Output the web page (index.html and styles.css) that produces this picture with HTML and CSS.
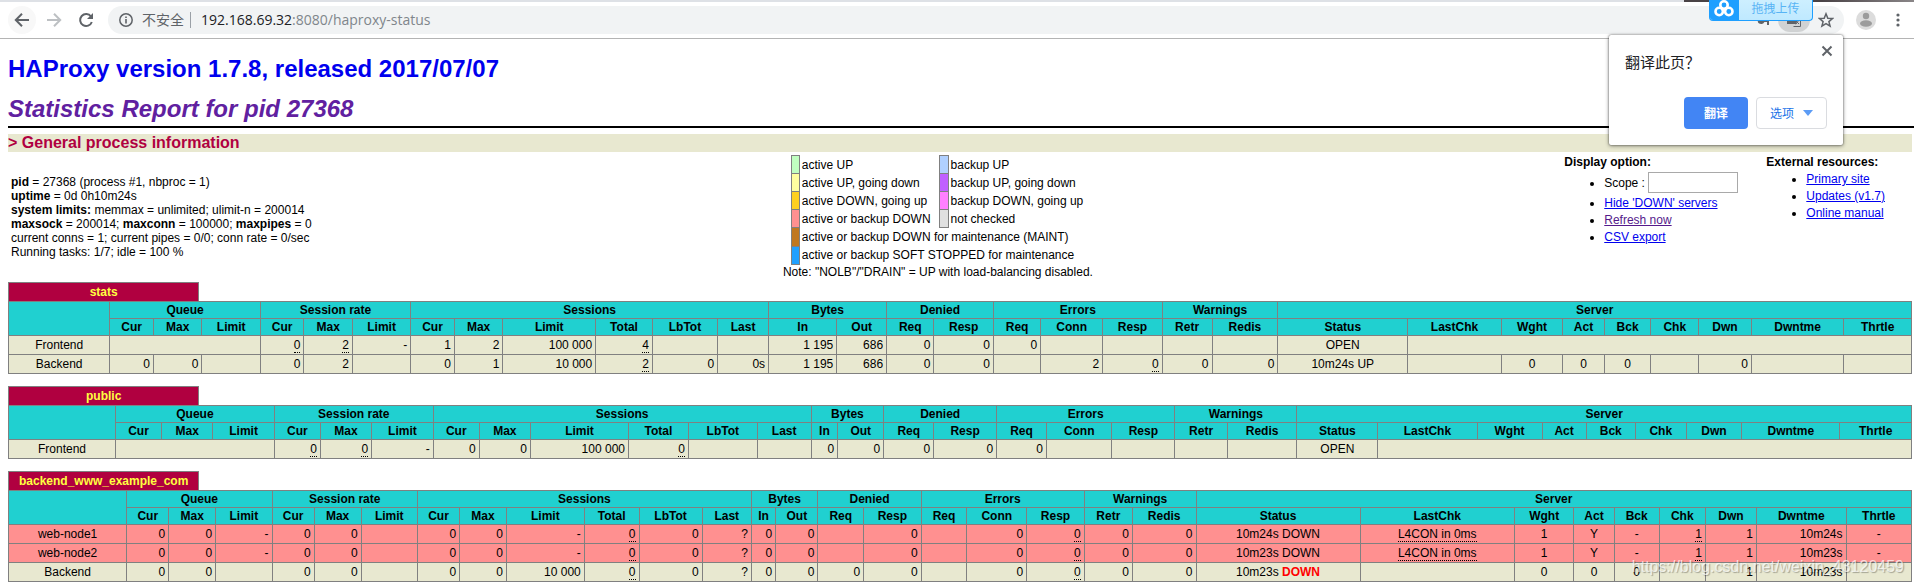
FILE: index.html
```html
<!DOCTYPE html>
<html lang="zh-CN">
	<head>
		<meta charset="utf-8">
		<title>Statistics Report for HAProxy</title>
		<link rel="stylesheet" href="styles.css">
	</head>
	<body>
		<div class="browser">
			<div class="tabstrip"><span class="tabedge"></span></div>
			<div class="toolbar">
				<button class="nav back" aria-label="Back"><svg width="16" height="16" viewBox="0 0 16 16"><path d="M15 8H2.5M8 1.8L1.8 8L8 14.2" fill="none" stroke="#5f6368" stroke-width="2"/></svg></button>
				<button class="nav" aria-label="Forward"><svg width="16" height="16" viewBox="0 0 16 16"><path d="M1 8H13.5M8 1.8L14.2 8L8 14.2" fill="none" stroke="#bdc0c3" stroke-width="2"/></svg></button>
				<button class="nav" aria-label="Reload"><svg width="16" height="16" viewBox="0 0 16 16"><path d="M13 4.5A6 6 0 1 0 13.8 10" fill="none" stroke="#5f6368" stroke-width="2"/><path d="M15 1V7H9z" fill="#5f6368"/></svg></button>
				<div class="omnibox">
					<svg width="16" height="16" viewBox="0 0 16 16"><circle cx="8" cy="8" r="6.2" fill="none" stroke="#5f6368" stroke-width="1.5"/><path d="M7.2 7h1.6v4.5H7.2zM7.2 4.4h1.6v1.6H7.2z" fill="#5f6368"/></svg>
					<span class="insecure">不安全</span>
					<span class="url"><b>192.168.69.32</b>:8080/haproxy-status</span>
					<svg class="key" width="14" height="14" viewBox="0 0 14 14"><path d="M5 4a3.5 3.5 0 1 0 3.4 5H11v3h2V6H8.4A3.500 3.500 0 0 0 5 4z" fill="#5f6368"/></svg>
					<button class="translate" aria-label="Translate"><svg width="16" height="16" viewBox="0 0 16 16"><path d="M1 1h7l3 11H1z" fill="#5f6368"/><path d="M9 4.500h5.500V14.500H7.500" fill="none" stroke="#5f6368"/><path d="M9.500 7.500h4M12.500 7.500c0 2-2 4-3 4.500M10 9l3 3" fill="none" stroke="#5f6368"/></svg></button>
					<button class="star" aria-label="Bookmark"><svg width="16" height="16" viewBox="0 0 16 16"><path d="M8 1.800L9.800 6.200L14.500 6.500L10.900 9.600L12.100 14.200L8 11.700L3.900 14.200L5.100 9.600L1.500 6.500L6.200 6.200z" fill="none" stroke="#5f6368" stroke-width="1.500"/></svg></button>
				</div>
				<button class="avatar" aria-label="Profile"><svg width="20" height="20" viewBox="0 0 20 20"><circle cx="10" cy="10" r="10" fill="#dcdcdc"/><circle cx="10" cy="6" r="3.200" fill="#9c9c9c"/><ellipse cx="10" cy="13.500" rx="6" ry="3.200" fill="#9c9c9c"/></svg></button>
				<button class="menu" aria-label="Menu"><svg width="4" height="16" viewBox="0 0 4 16"><circle cx="2" cy="3" r="1.600" fill="#5f6368"/><circle cx="2" cy="8" r="1.600" fill="#5f6368"/><circle cx="2" cy="13" r="1.600" fill="#5f6368"/></svg></button>
			</div>

			<button class="upload">
				<span class="cloud"><svg width="20" height="18" viewBox="0 0 20 18"><g fill="none" stroke="#fff" stroke-width="2.600"><circle cx="10" cy="5" r="3.700"/><circle cx="5.200" cy="11.500" r="3.700"/><circle cx="14.800" cy="11.500" r="3.700"/></g></svg></span>
				<span class="drag">拖拽上传</span>
			</button>

			<div class="bubble">
				<button class="close" aria-label="Close"><svg width="12" height="12" viewBox="0 0 12 12"><path d="M1.500 1.500L10.500 10.500M10.500 1.500L1.500 10.500" stroke="#5f6368" stroke-width="2"/></svg></button>
				<div class="question">翻译此页？</div>
				<div class="actions">
					<button class="primary">翻译</button>
					<button class="options">选项<svg width="10" height="6" viewBox="0 0 10 6"><path d="M0 0h10L5 6z" fill="#5c9cf5"/></svg></button>
				</div>
			</div>
		</div>

		<div class="page">
			<h1><a href="#">HAProxy version 1.7.8, released 2017/07/07</a></h1>
			<h2>Statistics Report for pid 27368</h2>
			<hr class="hr">
			<h3>&gt; General process information</h3>

			<div class="general">
				<p class="process">
					<b>pid</b> = 27368 (process #1, nbproc = 1)<br>
					<b>uptime</b> = 0d 0h10m24s<br>
					<b>system limits:</b> memmax = unlimited; ulimit-n = 200014<br>
					<b>maxsock</b> = 200014; <b>maxconn</b> = 100000; <b>maxpipes</b> = 0<br>
					current conns = 1; current pipes = 0/0; conn rate = 0/sec<br>
					Running tasks: 1/7; idle = 100 %
				</p>
				<div class="legend">
					<table class="lgd">
						<tr><td class="active_up">&nbsp;</td><td class="noborder">active UP</td><td class="backup_up">&nbsp;</td><td class="noborder">backup UP</td></tr>
						<tr><td class="active_going_down">&nbsp;</td><td class="noborder">active UP, going down</td><td class="backup_going_down">&nbsp;</td><td class="noborder">backup UP, going down</td></tr>
						<tr><td class="active_going_up">&nbsp;</td><td class="noborder">active DOWN, going up</td><td class="backup_going_up">&nbsp;</td><td class="noborder">backup DOWN, going up</td></tr>
						<tr><td class="active_down">&nbsp;</td><td class="noborder">active or backup DOWN &nbsp;</td><td class="no_check">&nbsp;</td><td class="noborder">not checked</td></tr>
						<tr><td class="maintain">&nbsp;</td><td class="noborder" colspan="3">active or backup DOWN for maintenance (MAINT)</td></tr>
						<tr><td class="soft_stop">&nbsp;</td><td class="noborder" colspan="3">active or backup SOFT STOPPED for maintenance</td></tr>
					</table>
					Note: "NOLB"/"DRAIN" = UP with load-balancing disabled.
				</div>
				<div>
					<b>Display option:</b>
					<ul>
						<li><label for="scope">Scope :</label> <input type="text" id="scope" name="scope"></li>
						<li><a href="#">Hide 'DOWN' servers</a></li>
						<li><a class="visited" href="#">Refresh now</a></li>
						<li><a href="#">CSV export</a></li>
					</ul>
				</div>
				<div>
					<b>External resources:</b>
					<ul>
						<li><a href="#">Primary site</a></li>
						<li><a href="#">Updates (v1.7)</a></li>
						<li><a href="#">Online manual</a></li>
					</ul>
				</div>
			</div>

			<table class="tbl">
				<tr><th class="pxname">stats</th><th class="empty"></th></tr>
			</table>
			<table class="tbl stat px_stats">
				<tr class="titre"><th rowspan="2"></th><th colspan="3">Queue</th><th colspan="3">Session rate</th><th colspan="6">Sessions</th><th colspan="2">Bytes</th><th colspan="2">Denied</th><th colspan="3">Errors</th><th colspan="2">Warnings</th><th class="server" colspan="9">Server</th></tr>
				<tr class="titre"><th>Cur</th><th>Max</th><th>Limit</th><th>Cur</th><th>Max</th><th>Limit</th><th>Cur</th><th>Max</th><th>Limit</th><th>Total</th><th>LbTot</th><th>Last</th><th>In</th><th>Out</th><th>Req</th><th>Resp</th><th>Req</th><th>Conn</th><th>Resp</th><th>Retr</th><th>Redis</th><th>Status</th><th>LastChk</th><th>Wght</th><th>Act</th><th>Bck</th><th>Chk</th><th>Dwn</th><th>Dwntme</th><th>Thrtle</th></tr>
				<tr class="frontend"><td class="ac">Frontend</td><td colspan="3"></td><td><u>0</u></td><td><u>2</u></td><td>-</td><td>1</td><td>2</td><td>100 000</td><td><u>4</u></td><td></td><td></td><td>1 195</td><td>686</td><td>0</td><td>0</td><td>0</td><td></td><td></td><td></td><td></td><td class="ac">OPEN</td><td class="ac" colspan="8"></td></tr>
				<tr class="backend"><td class="ac">Backend</td><td>0</td><td>0</td><td></td><td>0</td><td>2</td><td></td><td>0</td><td>1</td><td>10 000</td><td><u>2</u></td><td>0</td><td>0s</td><td>1 195</td><td>686</td><td>0</td><td>0</td><td></td><td>2</td><td><u>0</u></td><td>0</td><td>0</td><td class="ac">10m24s UP</td><td class="ac">&nbsp;</td><td class="ac">0</td><td class="ac">0</td><td class="ac">0</td><td class="ac">&nbsp;</td><td>0</td><td></td><td></td></tr>
			</table>

			<table class="tbl">
				<tr><th class="pxname">public</th><th class="empty"></th></tr>
			</table>
			<table class="tbl stat px_public">
				<tr class="titre"><th rowspan="2"></th><th colspan="3">Queue</th><th colspan="3">Session rate</th><th colspan="6">Sessions</th><th colspan="2">Bytes</th><th colspan="2">Denied</th><th colspan="3">Errors</th><th colspan="2">Warnings</th><th class="server" colspan="9">Server</th></tr>
				<tr class="titre"><th>Cur</th><th>Max</th><th>Limit</th><th>Cur</th><th>Max</th><th>Limit</th><th>Cur</th><th>Max</th><th>Limit</th><th>Total</th><th>LbTot</th><th>Last</th><th>In</th><th>Out</th><th>Req</th><th>Resp</th><th>Req</th><th>Conn</th><th>Resp</th><th>Retr</th><th>Redis</th><th>Status</th><th>LastChk</th><th>Wght</th><th>Act</th><th>Bck</th><th>Chk</th><th>Dwn</th><th>Dwntme</th><th>Thrtle</th></tr>
				<tr class="frontend"><td class="ac">Frontend</td><td colspan="3"></td><td><u>0</u></td><td><u>0</u></td><td>-</td><td>0</td><td>0</td><td>100 000</td><td><u>0</u></td><td></td><td></td><td>0</td><td>0</td><td>0</td><td>0</td><td>0</td><td></td><td></td><td></td><td></td><td class="ac">OPEN</td><td class="ac" colspan="8"></td></tr>
			</table>

			<table class="tbl">
				<tr><th class="pxname">backend_www_example_com</th><th class="empty"></th></tr>
			</table>
			<table class="tbl stat px_backend">
				<tr class="titre"><th rowspan="2"></th><th colspan="3">Queue</th><th colspan="3">Session rate</th><th colspan="6">Sessions</th><th colspan="2">Bytes</th><th colspan="2">Denied</th><th colspan="3">Errors</th><th colspan="2">Warnings</th><th class="server" colspan="9">Server</th></tr>
				<tr class="titre"><th>Cur</th><th>Max</th><th>Limit</th><th>Cur</th><th>Max</th><th>Limit</th><th>Cur</th><th>Max</th><th>Limit</th><th>Total</th><th>LbTot</th><th>Last</th><th>In</th><th>Out</th><th>Req</th><th>Resp</th><th>Req</th><th>Conn</th><th>Resp</th><th>Retr</th><th>Redis</th><th>Status</th><th>LastChk</th><th>Wght</th><th>Act</th><th>Bck</th><th>Chk</th><th>Dwn</th><th>Dwntme</th><th>Thrtle</th></tr>
				<tr class="active_down"><td class="ac">web-node1</td><td>0</td><td>0</td><td>-</td><td>0</td><td>0</td><td></td><td>0</td><td>0</td><td>-</td><td><u>0</u></td><td>0</td><td>?</td><td>0</td><td>0</td><td></td><td>0</td><td></td><td>0</td><td><u>0</u></td><td>0</td><td>0</td><td class="ac">10m24s DOWN</td><td class="ac"><u>L4CON in 0ms</u></td><td class="ac">1</td><td class="ac">Y</td><td class="ac">-</td><td><u>1</u></td><td>1</td><td>10m24s</td><td class="ac">-</td></tr>
				<tr class="active_down"><td class="ac">web-node2</td><td>0</td><td>0</td><td>-</td><td>0</td><td>0</td><td></td><td>0</td><td>0</td><td>-</td><td><u>0</u></td><td>0</td><td>?</td><td>0</td><td>0</td><td></td><td>0</td><td></td><td>0</td><td><u>0</u></td><td>0</td><td>0</td><td class="ac">10m23s DOWN</td><td class="ac"><u>L4CON in 0ms</u></td><td class="ac">1</td><td class="ac">Y</td><td class="ac">-</td><td><u>1</u></td><td>1</td><td>10m23s</td><td class="ac">-</td></tr>
				<tr class="backend"><td class="ac">Backend</td><td>0</td><td>0</td><td></td><td>0</td><td>0</td><td></td><td>0</td><td>0</td><td>10 000</td><td><u>0</u></td><td>0</td><td>?</td><td>0</td><td>0</td><td>0</td><td>0</td><td></td><td>0</td><td><u>0</u></td><td>0</td><td>0</td><td class="ac">10m23s <b class="down">DOWN</b></td><td class="ac">&nbsp;</td><td class="ac">0</td><td class="ac">0</td><td class="ac">0</td><td class="ac">&nbsp;</td><td>1</td><td>10m23s</td><td></td></tr>
			</table>
			<div class="watermark">https://blog.csdn.net/weixin_43120459</div>
		</div>
	</body>
</html>
```
FILE: styles.css
```css
body {
	margin: 0;
	font-family: "Liberation Sans", Arial, "Noto Sans CJK SC", sans-serif;
	font-size: 12px;
	line-height: 14px;
	color: black;
	background: white;
	overflow: hidden;
}
button {
	padding: 0;
	border: none;
	background: none;
	font-family: inherit;
	font-size: 12px;
	cursor: pointer;
}
svg { display: block; }

/* browser frame */
.browser {
	position: relative;
	z-index: 1;
	font-family: "Noto Sans", "Noto Sans CJK SC", sans-serif;
}
.tabstrip {
	display: flex;
	justify-content: flex-end;
	height: 2px;
	background: #dee1e6;
}
.tabedge {
	width: 12%;
	background: linear-gradient(90deg, #4a4346, #4a4346 60%, #8a8688);
}
.toolbar {
	display: flex;
	align-items: center;
	height: 36px;
	padding: 0 14px 0 8px;
	border-bottom: 1px solid #b4b4b4;
}
.nav {
	display: flex;
	align-items: center;
	justify-content: center;
	width: 28px;
	height: 28px;
	margin-right: 4px;
	border-radius: 14px;
}
.back { background: #f8f8f8; }
.omnibox {
	display: flex;
	flex: 1;
	align-items: center;
	height: 28px;
	margin-left: 4px;
	padding: 0 10px;
	border-radius: 14px;
	background: #f1f3f4;
}
.insecure {
	margin-left: 8px;
	padding-right: 6px;
	border-right: 1px solid #9aa0a6;
	font-size: 14px;
	line-height: 16px;
	color: #5f6368;
}
.url {
	flex: 1;
	margin-left: 10px;
	font-family: "Open Sans", "Noto Sans", sans-serif;
	font-size: 14px;
	color: #80868b;
}
.url b {
	font-weight: normal;
	color: #202124;
}
.translate {
	display: flex;
	align-items: center;
	justify-content: center;
	width: 32px;
	height: 24px;
	margin: 0 8px;
	border-radius: 12px;
	background: #d0d2d3;
}
.avatar { margin: 0 20px 0 12px; }

.upload {
	position: absolute;
	top: 0;
	right: 101px;
	display: flex;
	width: 104px;
	height: 21px;
	overflow: hidden;
	border: 1px solid #1e9fff;
	border-top: none;
	border-radius: 0 0 4px 4px;
	background: linear-gradient(#cdefff, #bfe9ff);
}
.cloud {
	width: 29px;
	height: 21px;
	padding-left: 4px;
	box-sizing: border-box;
	background: #1e9fff;
}
.drag {
	flex: 1;
	line-height: 18px;
	color: #58b4f5;
}

.bubble {
	position: absolute;
	top: 35px;
	right: 71px;
	width: 234px;
	height: 110px;
	box-sizing: border-box;
	padding: 17px 16px 16px;
	border-radius: 2px;
	background: white;
	box-shadow: 0 0 2px rgba(0,0,0,0.6), 0 1px 4px rgba(0,0,0,0.4);
}
.close {
	position: absolute;
	top: 10px;
	right: 10px;
}
.question {
	font-size: 15px;
	line-height: 20px;
	color: #202124;
}
.actions {
	display: flex;
	justify-content: flex-end;
	gap: 8px;
	margin-top: 25px;
}
.primary, .options {
	display: flex;
	align-items: center;
	justify-content: center;
	gap: 9px;
	height: 32px;
	box-sizing: border-box;
	border-radius: 4px;
}
.primary {
	width: 64px;
	background: #4285f4;
	color: white;
	font-weight: bold;
}
.options {
	width: 71px;
	border: 1px solid #dadce0;
	color: #1a73e8;
}

/* statistics page */
.page {
	position: relative;
	padding: 16px 2px 0 8px;
}
h1 {
	margin: 0 0 13px;
	font-size: 24px;
	line-height: 27px;
}
h1 a { text-decoration: none; }
h2 {
	margin: 0;
	font-size: 24px;
	line-height: 28px;
	font-style: italic;
	color: #6020a0;
}
h3 {
	margin: 0;
	font-size: 16px;
	line-height: 18px;
	color: #b00040;
	background: #e8e8d0;
}
.hr {
	width: 100%;
	margin: 3px 0 6px;
	border: 1px solid black;
}
a { color: #0000ee; }
.visited { color: #551a8b; }

.general {
	display: grid;
	grid-template-columns: auto 1fr auto auto;
	column-gap: 4px;
	padding: 3px;
	white-space: nowrap;
}
.process {
	align-self: center;
	margin: 0;
}
.legend { text-align: center; }
ul {
	margin: 3px 0 0;
	padding-left: 40px;
}
li {
	margin-top: 3px;
	margin-right: 24px;
}
li input {
	width: 90px;
	height: 21px;
	box-sizing: border-box;
	border: 1px solid #a9a9a9;
}

.lgd {
	margin: 0 auto;
	border-collapse: collapse;
	text-align: left;
}
.lgd td {
	padding: 1px 2px;
	border: 1px solid gray;
}
.lgd .noborder {
	padding: 2px;
	border-style: none;
}
.active_up { background: #c0ffc0; }
.active_going_down { background: #ffffa0; }
.active_going_up { background: #ffd020; }
.active_down { background: #ff9090; }
.backup_up { background: #b0d0ff; }
.backup_going_down { background: #c060ff; }
.backup_going_up { background: #ff80ff; }
.no_check { background: #e0e0e0; }
.maintain { background: #c07820; }
.soft_stop { background: #20a0ff; }

.tbl {
	width: 100%;
	border-collapse: collapse;
}
.stat { margin-bottom: 12px; }
.tbl td {
	padding: 2px 3px;
	border: 1px solid gray;
	text-align: right;
	white-space: nowrap;
}
.tbl .ac { text-align: center; }
.tbl th {
	padding: 1px;
	border: 1px solid gray;
}
.tbl .pxname {
	width: 10%;
	padding: 2px 3px;
	border-bottom-style: none;
	background: #b00040;
	color: #ffff40;
	white-space: nowrap;
}
.tbl .empty {
	width: 90%;
	border-style: none;
}
.px_stats .server { width: 33.3%; }
.px_public .server { width: 32.3%; }
.px_backend .server { width: 37.6%; }
.titre { background: #20d0d0; }
.frontend, .backend { background: #e8e8d0; }
.down { color: red; }
u {
	text-decoration: none;
	border-bottom: 1px dotted black;
}
.watermark {
	position: absolute;
	right: 10px;
	bottom: 6px;
	font-size: 16px;
	line-height: 18px;
	color: rgba(255,255,255,0.7);
	text-shadow: 1px 1px 1px rgba(0,0,0,0.3);
}
```
